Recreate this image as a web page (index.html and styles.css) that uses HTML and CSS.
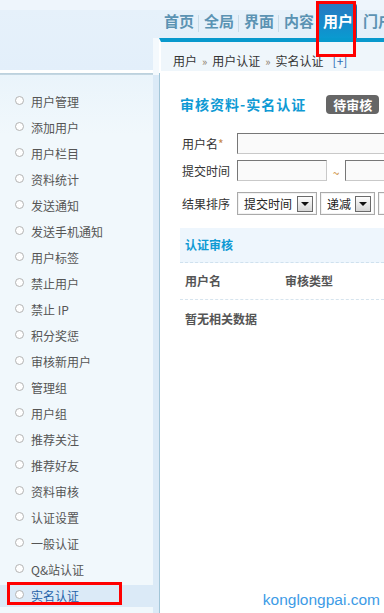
FILE: index.html
```html
<!DOCTYPE html>
<html lang="zh-CN">
<head>
<meta charset="utf-8">
<title>用户 - 实名认证</title>
<link rel="stylesheet" href="styles.css">
</head>
<body>
<div class="page">
  <aside class="side">
    <div class="side-head"></div>
    <div class="strip-head"></div>
    <ul class="menu">
      <li>用户管理</li>
      <li>添加用户</li>
      <li>用户栏目</li>
      <li>资料统计</li>
      <li>发送通知</li>
      <li>发送手机通知</li>
      <li>用户标签</li>
      <li>禁止用户</li>
      <li>禁止 IP</li>
      <li>积分奖惩</li>
      <li>审核新用户</li>
      <li>管理组</li>
      <li>用户组</li>
      <li>推荐关注</li>
      <li>推荐好友</li>
      <li>资料审核</li>
      <li>认证设置</li>
      <li>一般认证</li>
      <li>Q&amp;站认证</li>
      <li class="active">实名认证</li>
    </ul>
    <div class="strip"></div>
  </aside>
  <main class="main">
    <nav class="nav">
      <a class="tab">首页</a>
      <a class="tab">全局</a>
      <a class="tab">界面</a>
      <a class="tab">内容</a>
      <a class="tab on">用户</a>
      <a class="tab">门户</a>
    </nav>
    <div class="crumb">用户<span class="sep">»</span>用户认证<span class="sep">»</span>实名认证<span class="plus">[+]</span></div>
    <section class="content">
      <h1 class="title">审核资料-实名认证<span class="badge">待审核</span></h1>
      <div class="row r1">
        <label class="lbl">用户名<em>*</em></label>
        <span class="inp w-long"></span>
      </div>
      <div class="row r2">
        <label class="lbl">提交时间</label>
        <span class="inp w-date"></span>
        <span class="tilde">~</span>
        <span class="inp w-long"></span>
      </div>
      <div class="row r3">
        <label class="lbl">结果排序</label>
        <span class="sel s1"><span class="sel-t">提交时间</span><span class="arr"></span></span>
        <span class="sel s2"><span class="sel-t">递减</span><span class="arr"></span></span>
        <span class="sel s3"><span class="sel-t"></span><span class="arr"></span></span>
      </div>
      <div class="band">认证审核</div>
      <div class="thead"><span class="c1">用户名</span><span class="c2">审核类型</span></div>
      <div class="empty">暂无相关数据</div>
    </section>
  </main>
</div>
<div class="mark mark-nav"></div>
<div class="mark mark-side"></div>
<div class="wm">konglongpai.com</div>
</body>
</html>
```

FILE: styles.css
```css
* { box-sizing: border-box; }
html, body { margin: 0; padding: 0; }
body {
  width: 384px;
  height: 613px;
  overflow: hidden;
  position: relative;
  font-family: "Noto Sans CJK SC", "Liberation Sans", sans-serif;
  font-size: 12px;
  color: #333;
  background: #fff;
}
.page {
  display: flex;
  height: 613px;
}

/* sidebar */
.side {
  width: 159px;
  flex: none;
  display: grid;
  grid-template-columns: 153px 6px;
  grid-template-rows: 75px 1fr;
}
.side-head {
  background: linear-gradient(#eef5fc 0, #eef5fc 10px, #e6f1fa 10px, #e3effa 70px, #fff 70px, #fff 73px, #b9cfdc 73px, #c7d9e4 75px);
}
.strip-head {
  background: linear-gradient(#eef5fc 0, #eef5fc 10px, #e6f1fa 10px, #e5f0fa 38px, #f4f9fd 38px);
}
.strip { background: #dbeaf7; }
.menu {
  list-style: none;
  margin: 0;
  padding: 12px 0 0;
  background: linear-gradient(#eaf4fb, #f1f8fc 60px, #f1f8fc);
}
.menu li {
  display: flex;
  height: 22px;
  line-height: 22px;
  margin-top: 4px;
  color: #555;
  white-space: nowrap;
}
.menu li::before {
  content: "";
  flex: none;
  width: 7px;
  height: 7px;
  margin: 5px 7px 0 15px;
  border: 1px solid #b3b3b3;
  border-radius: 50%;
  background: #fff;
}
.menu li.active {
  background: #dbeaf7;
  color: #1f62a8;
}

/* main */
.main {
  flex: 1;
  min-width: 0;
  display: flex;
  flex-direction: column;
  overflow: hidden;
}
.nav {
  height: 38px;
  flex: none;
  display: flex;
  align-items: flex-end;
  background: linear-gradient(#eef5fc 0, #eef5fc 10px, #e6f1fa 10px, #e5f0fa 38px);
  white-space: nowrap;
}
.tab {
  position: relative;
  flex: none;
  height: 35px;
  line-height: 36px;
  padding: 0 4px 0 5px;
  margin-right: 1px;
  font-size: 15px;
  font-weight: bold;
  color: #5b93b3;
}
.tab::after {
  content: "";
  position: absolute;
  right: -1px;
  top: 12px;
  width: 1px;
  height: 17px;
  background: #c9dce8;
}
.tab.on {
  margin-left: -1px;
  padding: 0 4px 0 5px;
  width: 39px;
  color: #fff;
  border-radius: 4px 4px 0 0;
  background: linear-gradient(#2a78c0, #168bcb 60%, #0a9ad0);
  box-shadow: inset -2px 0 0 rgba(20, 60, 120, .35);
}
.tab.on::after, .tab:nth-child(4)::after { display: none; }

.crumb {
  flex: none;
  height: 35px;
  padding: 9px 0 0 12px;
  line-height: 20px;
  border-top: 4px solid #0899cd;
  border-left: 2px solid #fff;
  border-bottom: 2px solid #fff;
  background: #eff6fb;
  white-space: nowrap;
  color: #333;
}
.sep {
  margin: 0 5px;
  color: #8c7a68;
  font-size: 11px;
}
.plus {
  margin-left: 9px;
  color: #2a6bb5;
}

.content {
  flex: 1;
  border-left: 1px solid #a3c6d8;
  padding: 0 0 0 20px;
  white-space: nowrap;
}
.title {
  display: flex;
  align-items: center;
  margin: 21px 0 0;
  height: 20px;
  font-size: 14px;
  font-weight: bold;
  letter-spacing: 1px;
  color: #0f9ad4;
}
.badge {
  margin-left: 20px;
  height: 19px;
  line-height: 19px;
  padding: 0 7px;
  border-radius: 4px;
  background: #666;
  color: #fff;
  font-size: 13px;
  letter-spacing: 0;
  font-weight: bold;
}

.row {
  display: flex;
  align-items: center;
  padding-left: 2px;
}
.r1 { margin-top: 19px; height: 21px; }
.r2 { margin-top: 6px; height: 21px; }
.r3 { margin-top: 11px; height: 23px; }
.lbl {
  width: 55px;
  flex: none;
  color: #333;
}
.lbl em {
  font-style: normal;
  color: #c8884a;
}
.inp {
  flex: none;
  height: 21px;
  border: 1px solid;
  border-color: #777 #c9c9c9 #c9c9c9 #777;
  background: #fafafa;
}
.w-long { width: 200px; }
.w-date { width: 90px; }
.tilde {
  flex: none;
  width: 18px;
  text-align: center;
  color: #c9862d;
  font-size: 12px;
  padding-top: 3px;
}
.sel {
  flex: none;
  display: flex;
  align-items: center;
  height: 23px;
  border: 1px solid #aaa;
  background: #fff;
  box-shadow: inset 0 0 0 1px #f2f2f2;
  padding-left: 6px;
  margin-right: 3px;
}
.s1 { width: 80px; }
.s2 { width: 55px; margin-left: 0; }
.s3 { width: 50px; }
.sel-t { flex: 1; color: #222; }
.arr {
  flex: none;
  position: relative;
  width: 16px;
  height: 16px;
  margin-right: 3px;
  border: 1px solid #6a6a6a;
  background: linear-gradient(#fdfdfd, #d6d6d6);
}
.arr::after {
  content: "";
  position: absolute;
  left: 3px;
  top: 5px;
  border-left: 4px solid transparent;
  border-right: 4px solid transparent;
  border-top: 4px solid #111;
}

.band {
  margin-top: 13px;
  height: 35px;
  line-height: 34px;
  padding-left: 5px;
  background: #eef6fd;
  border-bottom: 1px dashed #cfe1ee;
  color: #0f9ad4;
  font-weight: bold;
}
.thead {
  display: flex;
  height: 37px;
  line-height: 36px;
  padding-left: 5px;
  border-bottom: 1px dashed #d6e4ee;
  font-weight: bold;
  color: #555;
}
.c1 { width: 100px; }
.empty {
  height: 38px;
  line-height: 38px;
  padding-left: 5px;
  font-weight: bold;
  color: #555;
}

/* annotation overlays */
.mark {
  position: absolute;
  border: 3px solid #f00;
  pointer-events: none;
}
.mark-nav { left: 316px; top: 1px; width: 40px; height: 56px; }
.mark-side { left: 7px; top: 582px; width: 115px; height: 23px; }

.wm {
  position: absolute;
  right: 4px;
  bottom: 4px;
  font-family: "Liberation Sans", Arial, sans-serif;
  font-size: 15.5px;
  line-height: 18px;
  color: #3d9be6;
}
```
